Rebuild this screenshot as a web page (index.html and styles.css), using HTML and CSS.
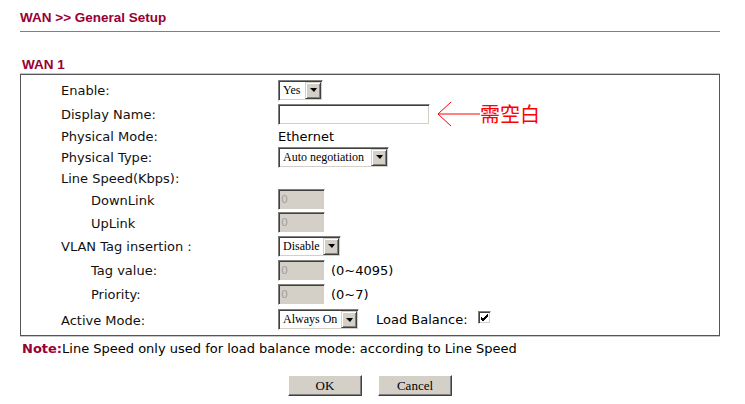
FILE: index.html
```html
<!DOCTYPE html>
<html lang="en">
<head>
  <meta charset="UTF-8" />
  <title>WAN General Setup</title>
  <link rel="stylesheet" href="styles.css">
</head>
<body>
  <div class="page">
    <h1 class="title">WAN &gt;&gt; General Setup</h1>
    <hr class="rule">
    <h2 class="subtitle">WAN 1</h2>

    <div class="box">
      <div class="lbl">Enable:</div>
      <div class="ctl">
        <span class="sel w-yes"><span class="val">Yes</span><span class="drop"><i></i></span></span>
      </div>

      <div class="lbl">Display Name:</div>
      <div class="ctl">
        <input class="txt w-name" type="text" value="">
        <svg class="arrow" width="44" height="28" viewBox="0 0 44 28">
          <path d="M2 14 H44 M2 14 L15 2 M2 14 L15 26" stroke="#ff0000" stroke-width="1" fill="none"/>
        </svg>
        <span class="note-red">需空白</span>
      </div>

      <div class="lbl">Physical Mode:</div>
      <div class="ctl plain">Ethernet</div>

      <div class="lbl">Physical Type:</div>
      <div class="ctl">
        <span class="sel w-type"><span class="val">Auto negotiation</span><span class="drop"><i></i></span></span>
      </div>

      <div class="lbl">Line Speed(Kbps):</div>
      <div class="ctl"></div>

      <div class="lbl sub">DownLink</div>
      <div class="ctl"><input class="txt off w-num" type="text" value="0" disabled></div>

      <div class="lbl sub">UpLink</div>
      <div class="ctl"><input class="txt off w-num" type="text" value="0" disabled></div>

      <div class="lbl">VLAN Tag insertion :</div>
      <div class="ctl">
        <span class="sel w-vlan"><span class="val">Disable</span><span class="drop"><i></i></span></span>
      </div>

      <div class="lbl sub">Tag value:</div>
      <div class="ctl"><input class="txt off w-num" type="text" value="0" disabled><span class="hint">(0~4095)</span></div>

      <div class="lbl sub">Priority:</div>
      <div class="ctl"><input class="txt off w-num" type="text" value="0" disabled><span class="hint">(0~7)</span></div>

      <div class="lbl">Active Mode:</div>
      <div class="ctl">
        <span class="sel w-mode"><span class="val">Always On</span><span class="drop"><i></i></span></span>
        <span class="lb">Load Balance:</span>
        <span class="chk">
          <svg width="9" height="9" viewBox="0 0 9 9"><path d="M1 4 L3 6 L8 1 M1 5 L3 7 L8 2 M1 6 L3 8 L8 3" stroke="#000" stroke-width="1" fill="none"/></svg>
        </span>
      </div>
    </div>

    <p class="note"><b>Note:</b>Line Speed only used for load balance mode: according to Line Speed</p>

    <div class="actions">
      <button class="btn">OK</button>
      <button class="btn">Cancel</button>
    </div>
  </div>
</body>
</html>
```

FILE: styles.css
```css
body {
  margin: 0;
  background: #fff;
  font-family: "DejaVu Sans", Verdana, sans-serif;
  font-size: 13px;
  color: #000;
}
.page {
  width: 700px;
  padding: 10px 0 0 20px;
}
.title, .subtitle {
  margin: 0;
  font-family: "Liberation Sans", Arial, sans-serif;
  font-size: 13.5px;
  line-height: 15px;
  font-weight: bold;
  color: #990033;
}
.subtitle {
  margin: 25px 0 0 2px;
}
.rule {
  margin: 6px 0 0;
  border: 0;
  border-top: 1px solid #808080;
  height: 0;
}
.box {
  margin-top: 2px;
  border: 1px solid #555;
  box-shadow: 0 -1px 0 #c8c8c8, 0 1px 0 #c8c8c8;
  padding: 3px 0 2px 40px;
  display: grid;
  grid-template-columns: 217px 1fr;
  grid-template-rows: 24px 24px 20px 22px 20px 23px 23px 24px 24px 24px 27px;
  align-items: center;
}
.lbl {
  line-height: 16px;
  padding-top: 2px;
  color: #111;
}
.lbl.sub {
  padding-left: 30px;
}
.ctl {
  display: flex;
  align-items: center;
  height: 100%;
}
.plain {
  line-height: 16px;
  padding-top: 2px;
  box-sizing: border-box;
}

/* classic windows controls */
.sel, .txt {
  box-sizing: border-box;
  height: 21px;
  border: 1px solid;
  border-color: #808080 #fff #fff #808080;
  box-shadow: inset 1px 1px 0 #404040, inset -1px -1px 0 #d4d0c8;
  background: #fff;
}
.sel {
  display: inline-flex;
  align-items: stretch;
  padding: 1px;
  font-family: "Liberation Serif", "Times New Roman", serif;
  font-size: 12px;
}
.sel .val {
  flex: 1;
  padding: 0 3px;
  line-height: 17px;
  white-space: nowrap;
  overflow: hidden;
}
.drop {
  width: 16px;
  box-sizing: border-box;
  background: #d4d0c8;
  border: 1px solid;
  border-color: #d4d0c8 #404040 #404040 #d4d0c8;
  box-shadow: inset 1px 1px 0 #fff, inset -1px -1px 0 #808080;
  display: flex;
  align-items: center;
  justify-content: center;
}
.drop i {
  width: 0;
  height: 0;
  border-left: 4px solid transparent;
  border-right: 3px solid transparent;
  border-top: 4px solid #000;
}
.w-yes { width: 45px; }
.w-type { width: 111px; }
.w-vlan { width: 63px; }
.w-mode { width: 81px; }

.txt {
  padding: 0 3px;
  font-family: "DejaVu Sans", sans-serif;
  font-size: 11px;
  outline: none;
}
.w-name { width: 152px; height: 21px; }
.w-num { width: 47px; }
.txt.off {
  background: #d4d0c8;
  color: #a0a0a0;
  padding-left: 2px;
}

.arrow {
  margin-left: 6px;
  flex: none;
}
.note-red {
  margin-left: 0;
  font-family: "Noto Sans CJK TC", "Noto Sans CJK SC", sans-serif;
  font-size: 20px;
  line-height: 20px;
  color: #ff0000;
}
.hint {
  margin-left: 6px;
}
.lb {
  margin-left: 17px;
}
.chk {
  margin-left: 10px;
  box-sizing: border-box;
  width: 13px;
  height: 13px;
  border: 1px solid;
  border-color: #808080 #fff #fff #808080;
  box-shadow: inset 1px 1px 0 #404040, inset -1px -1px 0 #d4d0c8;
  background: #fff;
  display: flex;
  align-items: center;
  justify-content: center;
  margin-top: -4px;
}
.chk svg {
  display: block;
}

.note {
  margin: 5px 0 0 2px;
  line-height: 15px;
}
.note b {
  color: #990033;
}
.actions {
  margin-top: 19px;
  display: flex;
  justify-content: center;
  gap: 16px;
}
.btn {
  box-sizing: border-box;
  width: 74px;
  height: 21px;
  padding: 0;
  background: #d4d0c8;
  border: 1px solid;
  border-color: #fff #404040 #404040 #fff;
  box-shadow: inset -1px -1px 0 #808080;
  font-family: "Liberation Serif", "Times New Roman", serif;
  font-size: 13px;
  color: #000;
}
```
